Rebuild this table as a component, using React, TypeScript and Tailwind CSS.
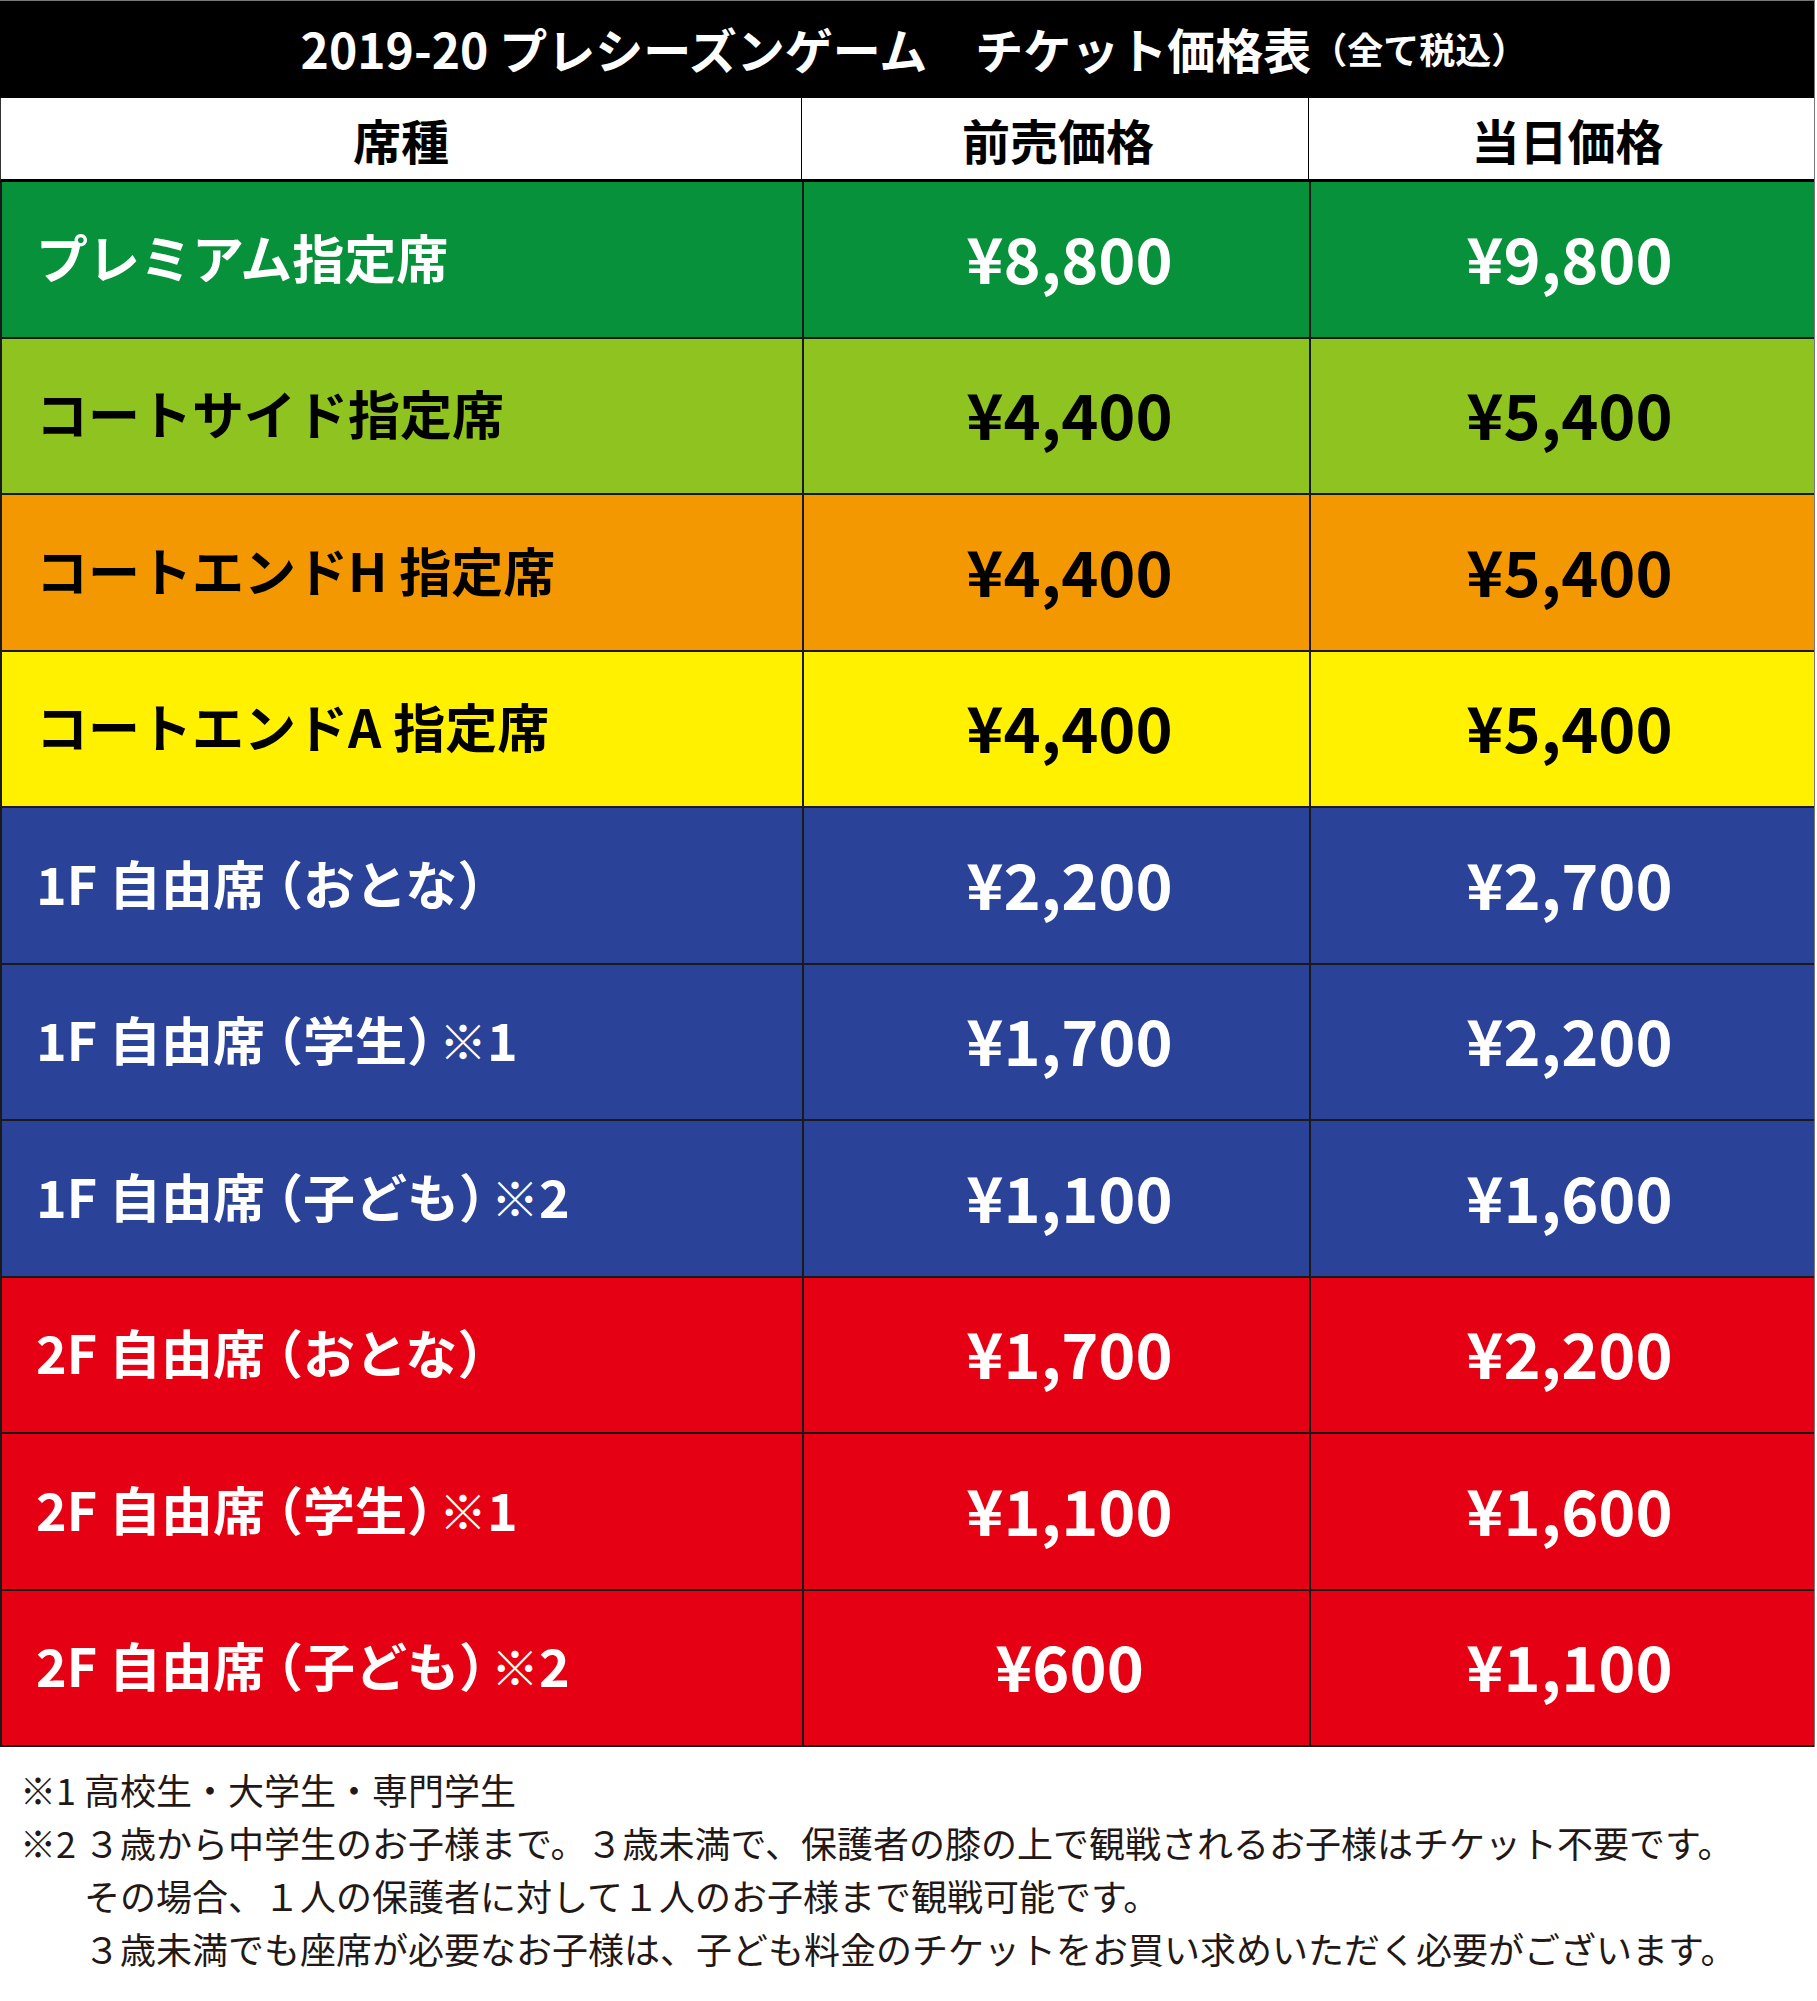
import React from "react";

type Row = {
  label: React.ReactNode;
  pre: string;
  day: string;
  bg: string;
  fg: string;
};

const Open = () => <span className="ml-[-14px]">（</span>;
const Close = () => <span className="mr-[-20px]">）</span>;
const Mark = ({ n }: { n: string }) => (
  <>
    <span className="font-light text-[48px]">※</span>
    <span>{n}</span>
  </>
);

const rows: Row[] = [
  { label: "プレミアム指定席", pre: "¥8,800", day: "¥9,800", bg: "bg-[#08913b]", fg: "text-white" },
  { label: "コートサイド指定席", pre: "¥4,400", day: "¥5,400", bg: "bg-[#8fc31f]", fg: "text-black" },
  { label: "コートエンドH 指定席", pre: "¥4,400", day: "¥5,400", bg: "bg-[#f39800]", fg: "text-black" },
  { label: "コートエンドA 指定席", pre: "¥4,400", day: "¥5,400", bg: "bg-[#fff100]", fg: "text-black" },
  {
    label: <>1F 自由席<Open />おとな<Close /></>,
    pre: "¥2,200", day: "¥2,700", bg: "bg-[#2a4398]", fg: "text-white",
  },
  {
    label: <>1F 自由席<Open />学生<Close /><Mark n="1" /></>,
    pre: "¥1,700", day: "¥2,200", bg: "bg-[#2a4398]", fg: "text-white",
  },
  {
    label: <>1F 自由席<Open />子ども<Close /><Mark n="2" /></>,
    pre: "¥1,100", day: "¥1,600", bg: "bg-[#2a4398]", fg: "text-white",
  },
  {
    label: <>2F 自由席<Open />おとな<Close /></>,
    pre: "¥1,700", day: "¥2,200", bg: "bg-[#e60013]", fg: "text-white",
  },
  {
    label: <>2F 自由席<Open />学生<Close /><Mark n="1" /></>,
    pre: "¥1,100", day: "¥1,600", bg: "bg-[#e60013]", fg: "text-white",
  },
  {
    label: <>2F 自由席<Open />子ども<Close /><Mark n="2" /></>,
    pre: "¥600", day: "¥1,100", bg: "bg-[#e60013]", fg: "text-white",
  },
];

export default function App() {
  return (
    <main className="w-[1817px] min-h-[2001px] bg-white font-['Noto_Sans_CJK_JP','Noto_Sans',sans-serif]">
      <div className="w-[1815px] border-r border-[#777]">
        {/* title bar */}
        <div className="h-[98px] bg-black border-t border-[#777] flex items-center justify-center pb-[4px] pl-[14px] text-white font-bold">
          <span className="text-[48px] leading-none">2019-20 プレシーズンゲーム　チケット価格表</span>
          <span className="text-[36px] leading-none">（全て税込）</span>
        </div>

        {/* column headings */}
        <div className="grid grid-cols-[800px_507px_1fr] h-[84px] border-b-[3px] border-black border-l border-l-[#333] text-[48px] font-bold text-black leading-none">
          <div className="flex items-center justify-center">席種</div>
          <div className="flex items-center justify-center border-l border-black pl-[6px]">前売価格</div>
          <div className="flex items-center justify-center border-l border-black pl-[12px]">当日価格</div>
        </div>

        {rows.map((r, i) => (
          <div
            key={i}
            className={`grid grid-cols-[800px_507px_1fr] h-[156.5px] border-b-2 border-l-2 border-[#1a1a1a] font-bold leading-none ${r.bg} ${r.fg}`}
          >
            <div className="flex items-center pl-[34px] pb-[5px] text-[52px] whitespace-nowrap">{r.label}</div>
            <div className="flex items-center justify-center border-l-2 border-[#1a1a1a] pl-[26px] pb-[6px] text-[63px]">{r.pre}</div>
            <div className="flex items-center justify-center border-l-2 border-[#1a1a1a] pl-[14px] pb-[6px] text-[63px]">{r.day}</div>
          </div>
        ))}
      </div>

      {/* notes */}
      <div className="pt-[16px] pl-[20px] text-[36px] leading-[53px] text-[#231815] font-normal">
        <div className="flex">
          <span className="w-[64px] shrink-0">※1</span>
          <span>高校生・大学生・専門学生</span>
        </div>
        <div className="flex">
          <span className="w-[64px] shrink-0">※2</span>
          <div>
            <p>３歳から中学生のお子様まで。３歳未満で、保護者の膝の上で観戦されるお子様はチケット不要です。</p>
            <p>その場合、１人の保護者に対して１人のお子様まで観戦可能です。</p>
            <p>３歳未満でも座席が必要なお子様は、子ども料金のチケットをお買い求めいただく必要がございます。</p>
          </div>
        </div>
      </div>
    </main>
  );
}
